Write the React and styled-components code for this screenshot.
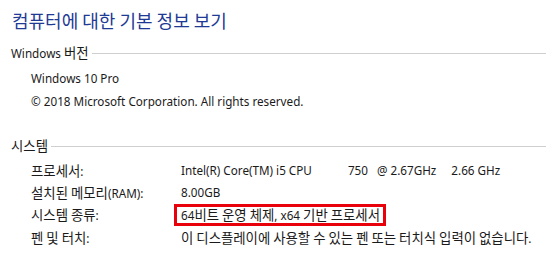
import React from "react";
import styled, { createGlobalStyle } from "styled-components";

const GlobalStyle = createGlobalStyle`
  html, body {
    margin: 0;
    padding: 0;
    background: #ffffff;
  }
  body {
    font-family: "Noto Sans", "Noto Sans CJK KR", sans-serif;
    color: #1a1a1a;
  }
`;

// Hangul runs are set a little larger than the Latin text, as in Malgun Gothic
const HANGUL = /([\u1100-\u11ff\u3130-\u318f\uac00-\ud7af]+(?:\s+[\u1100-\u11ff\u3130-\u318f\uac00-\ud7af]+)*)/;

function Mixed({ text }) {
  return text.split(HANGUL).map((part, i) =>
    i % 2 === 1 ? <Ko key={i}>{part}</Ko> : <React.Fragment key={i}>{part}</React.Fragment>
  );
}

function Processor() {
  return (
    <>
      Intel(R) Core(TM) i5 CPU
      <Spaced $gap={36}>750</Spaced>
      <Spaced $gap={9}>@ 2.67GHz</Spaced>
      <Spaced $gap={15}>2.66 GHz</Spaced>
    </>
  );
}

function App() {
  const systemRows = [
    { label: "프로세서:", value: <Processor /> },
    { label: "설치된 메모리(RAM):", value: "8.00GB" },
    { label: "시스템 종류:", value: "64비트 운영 체제, x64 기반 프로세서", marked: true },
    { label: "펜 및 터치:", value: "이 디스플레이에 사용할 수 있는 펜 또는 터치식 입력이 없습니다." },
  ];

  return (
    <Page>
      <GlobalStyle />
      <Title>컴퓨터에 대한 기본 정보 보기</Title>

      <SectionHead $top={14}>
        <span>
          <Mixed text="Windows 버전" />
        </span>
        <Rule />
      </SectionHead>
      <PlainList>
        <PlainRow>Windows 10 Pro</PlainRow>
        <PlainRow>© 2018 Microsoft Corporation. All rights reserved.</PlainRow>
      </PlainList>

      <SectionHead $top={24}>
        <span>
          <Mixed text="시스템" />
        </span>
        <Rule />
      </SectionHead>
      <InfoGrid>
        {systemRows.map((row) => {
          const value = typeof row.value === "string" ? <Mixed text={row.value} /> : row.value;
          return (
            <React.Fragment key={row.label}>
              <Label>
                <Mixed text={row.label} />
              </Label>
              <Value>{row.marked ? <Marked>{value}</Marked> : value}</Value>
            </React.Fragment>
          );
        })}
      </InfoGrid>
    </Page>
  );
}

export default App;

const Page = styled.div`
  width: 546px;
  height: 254px;
  overflow: hidden;
  font-size: 11.7px;
`;

const Ko = styled.span`
  font-family: "Noto Sans CJK KR", sans-serif;
  font-size: 13.4px;
`;

const Spaced = styled.span`
  margin-left: ${(p) => p.$gap}px;
`;

const Title = styled.h1`
  margin: 10px 0 0 12px;
  font-family: "Noto Sans CJK KR", sans-serif;
  font-size: 18px;
  font-weight: 400;
  line-height: 20px;
  color: #1e3a94;
`;

const SectionHead = styled.div`
  display: flex;
  align-items: center;
  gap: 3px;
  margin-top: ${(p) => p.$top}px;
  padding-left: 11px;
  height: 16px;
  line-height: 16px;
  color: #1a1a1a;
`;

const Rule = styled.div`
  flex: 1;
  height: 1px;
  background: #cfcfcf;
  margin-top: 2px;
`;

const PlainList = styled.div`
  margin-top: 7px;
  padding-left: 31px;
`;

const PlainRow = styled.div`
  line-height: 23px;
  height: 23px;
  white-space: nowrap;
`;

const InfoGrid = styled.div`
  display: grid;
  grid-template-columns: 150px 1fr;
  grid-auto-rows: 22.33px;
  margin-top: 6px;
  padding-left: 31px;
  align-items: center;
`;

const Label = styled.div`
  white-space: nowrap;
  line-height: 16px;
`;

const Value = styled.div`
  white-space: nowrap;
  line-height: 16px;
`;

const Marked = styled.span`
  display: inline-block;
  border: 3px solid #e8000b;
  padding: 0 3px 0 4px;
  margin-left: -7px;
  line-height: 15px;
`;
